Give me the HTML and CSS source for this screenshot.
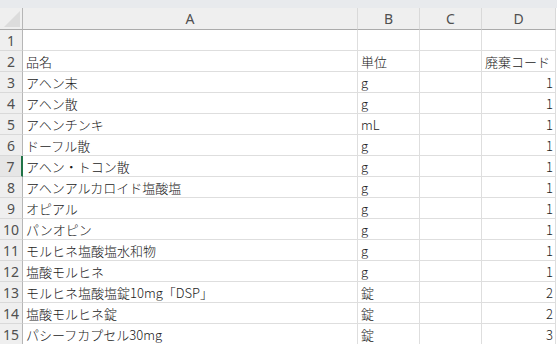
FILE: index.html
```html
<!DOCTYPE html>
<html lang="ja">
<head>
    <meta charset="UTF-8">
    <title>廃棄コード一覧</title>
    <link rel="stylesheet" href="styles.css">
</head>
<body>
    <div class="topbar"></div>
    <div class="sheet">
        <div class="corner"><span class="tri"></span></div>
        <div class="colhead">A</div>
        <div class="colhead">B</div>
        <div class="colhead">C</div>
        <div class="colhead">D</div>

        <div class="rowhead">1</div><div class="cell"></div><div class="cell"></div><div class="cell"></div><div class="cell"></div>
        <div class="rowhead">2</div><div class="cell">品名</div><div class="cell">単位</div><div class="cell"></div><div class="cell">廃棄コード</div>
        <div class="rowhead">3</div><div class="cell">アヘン末</div><div class="cell">g</div><div class="cell"></div><div class="cell num">1</div>
        <div class="rowhead">4</div><div class="cell">アヘン散</div><div class="cell">g</div><div class="cell"></div><div class="cell num">1</div>
        <div class="rowhead">5</div><div class="cell">アヘンチンキ</div><div class="cell">mL</div><div class="cell"></div><div class="cell num">1</div>
        <div class="rowhead">6</div><div class="cell">ドーフル散</div><div class="cell">g</div><div class="cell"></div><div class="cell num">1</div>
        <div class="rowhead active">7</div><div class="cell">アヘン・トコン散</div><div class="cell">g</div><div class="cell"></div><div class="cell num">1</div>
        <div class="rowhead">8</div><div class="cell">アヘンアルカロイド塩酸塩</div><div class="cell">g</div><div class="cell"></div><div class="cell num">1</div>
        <div class="rowhead">9</div><div class="cell">オピアル</div><div class="cell">g</div><div class="cell"></div><div class="cell num">1</div>
        <div class="rowhead">10</div><div class="cell">パンオピン</div><div class="cell">g</div><div class="cell"></div><div class="cell num">1</div>
        <div class="rowhead">11</div><div class="cell">モルヒネ塩酸塩水和物</div><div class="cell">g</div><div class="cell"></div><div class="cell num">1</div>
        <div class="rowhead">12</div><div class="cell">塩酸モルヒネ</div><div class="cell">g</div><div class="cell"></div><div class="cell num">1</div>
        <div class="rowhead">13</div><div class="cell">モルヒネ塩酸塩錠10mg「DSP」</div><div class="cell">錠</div><div class="cell"></div><div class="cell num">2</div>
        <div class="rowhead">14</div><div class="cell">塩酸モルヒネ錠</div><div class="cell">錠</div><div class="cell"></div><div class="cell num">2</div>
        <div class="rowhead">15</div><div class="cell">パシーフカプセル30mg</div><div class="cell">錠</div><div class="cell"></div><div class="cell num">3</div>
    </div>
</body>
</html>
```

FILE: styles.css
```css
body {
    margin: 0;
    padding: 0;
    background: #fff;
    font-family: "Noto Sans CJK JP", sans-serif;
    overflow: hidden;
}

.topbar {
    height: 8px;
    background: #e8eaed;
}

.sheet {
    display: grid;
    grid-template-columns: 23px 335px 62px 62px 74px;
    grid-template-rows: 22px;
    grid-auto-rows: 21px;
}

.corner,
.colhead,
.rowhead,
.cell {
    box-sizing: border-box;
}

.corner {
    background: #efefef;
    border-right: 1px solid #b6b6b6;
    border-bottom: 1px solid #ababab;
    display: flex;
    justify-content: flex-end;
    align-items: flex-end;
    padding: 0 2px 2px 0;
}

.tri {
    width: 0;
    height: 0;
    border-left: 16px solid transparent;
    border-bottom: 16px solid #dcdcdc;
}

.colhead,
.rowhead {
    background: #efefef;
    color: #505050;
    font-family: "Noto Sans", sans-serif;
    font-size: 14px;
    display: flex;
    align-items: center;
    justify-content: center;
}

.colhead {
    border-right: 1px solid #d9d9d9;
    border-bottom: 1px solid #ababab;
}

.rowhead {
    border-right: 1px solid #b6b6b6;
    border-bottom: 1px solid #d9d9d9;
}

.rowhead.active {
    background: #e6e6e6;
    border-right: 2px solid #217346;
}

.cell {
    border-right: 1px solid #dedede;
    border-bottom: 1px solid #dedede;
    color: #1a1a1a;
    font-size: 13px;
    font-weight: 300;
    padding: 0 3px;
    display: flex;
    align-items: center;
    white-space: nowrap;
    overflow: hidden;
}

.num {
    justify-content: flex-end;
    padding-right: 2px;
}
```
